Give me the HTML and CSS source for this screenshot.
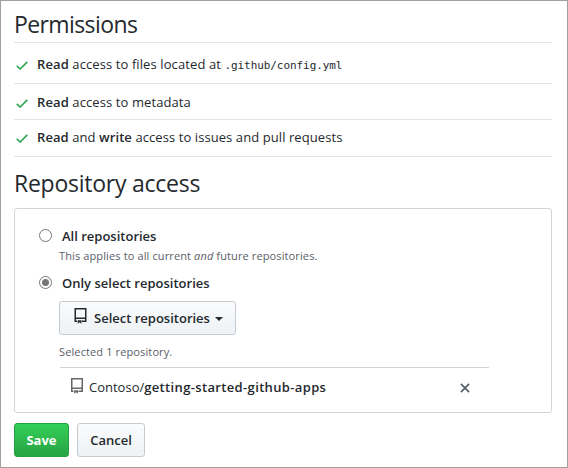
FILE: index.html
```html
<!DOCTYPE html>
<html lang="en">
<head>
<meta charset="utf-8">
<title>Permissions</title>
<link rel="stylesheet" href="styles.css">
</head>
<body>
<main class="page">
  <h2 class="heading">Permissions</h2>
  <ul class="permissions">
    <li class="permission permission-first">
      <svg class="check" viewBox="0 0 12 9" width="12" height="9"><path d="M.8 4.8 4.2 8 11.3.9"/></svg>
      <span class="files"><b>Read</b> access to files located at <code>.github/config.yml</code></span>
    </li>
    <li class="permission">
      <svg class="check" viewBox="0 0 12 9" width="12" height="9"><path d="M.8 4.8 4.2 8 11.3.9"/></svg>
      <span class="metadata"><b>Read</b> access to metadata</span>
    </li>
    <li class="permission permission-last">
      <svg class="check" viewBox="0 0 12 9" width="12" height="9"><path d="M.8 4.8 4.2 8 11.3.9"/></svg>
      <span class="issues"><b>Read</b> and <b>write</b> access to issues and pull requests</span>
    </li>
  </ul>
  <h2 class="heading heading-access">Repository access</h2>
  <section class="box">
    <label class="option"><span class="radio"></span><b class="all">All repositories</b></label>
    <p class="note note-all">This applies to all current <em>and</em> future repositories.</p>
    <label class="option option-select"><span class="radio checked"></span><b>Only select repositories</b></label>
    <button class="btn btn-select" type="button">
      <svg class="repo" viewBox="0 0 12 16" width="13" height="16"><path class="repo-cover" d="M2.500 13.200H.75V.75h10.500V13.200H7.500M.75 10.300h10.500"/><path class="repo-tag" d="M3.200 12.300h3.800v3.500L5.100 14.300 3.200 15.800z"/></svg>
      <span class="select-text">Select repositories</span>
      <span class="caret"></span>
    </button>
    <p class="note note-selected">Selected 1 repository.</p>
    <div class="repo-row">
      <svg class="repo repo-muted" viewBox="0 0 12 16" width="12" height="16"><path class="repo-cover" d="M2.500 13.200H.75V.75h10.500V13.200H7.500M.75 10.300h10.500"/><path class="repo-tag" d="M3.200 12.300h3.800v3.500L5.100 14.300 3.200 15.800z"/></svg>
      <span class="repo-name">Contoso/<b>getting-started-github-apps</b></span>
      <svg class="remove" viewBox="0 0 10 10" width="10" height="10"><path d="m.9.900 8.200 8.200m0-8.200L.9 9.100"/></svg>
    </div>
  </section>
  <div class="actions">
    <button class="btn btn-save" type="button">Save</button>
    <button class="btn btn-cancel" type="button">Cancel</button>
  </div>
</main>
</body>
</html>
```
FILE: styles.css
```css
* { box-sizing: border-box; }
body { margin: 0; background: #fff; color: #24292e; font: 13px/20px "Open Sans", "Noto Sans", sans-serif; }
b { font-weight: 600; }
.page { width: 568px; height: 468px; padding: 0 15px 0 13px; border: 1px solid #a0a0a0; overflow: hidden; }
.heading { margin: 0; height: 41px; padding-top: 7px; font-size: 23px; line-height: 32px; font-weight: 400; letter-spacing: -.6px; }
.permissions { list-style: none; margin: 0; padding: 0; border-top: 1px solid #e1e4e8; }
.permission { display: flex; align-items: center; height: 36px; padding-left: 2px; border-bottom: 1px solid #e1e4e8; }
.permission-first { height: 41px; padding-top: 1px; }
.permission-last { height: 37px; padding-bottom: 2px; }
.check { width: 12px; margin: 3px 9px 0 0; fill: none; stroke: #2ea44f; stroke-width: 1.6; }
.files, .metadata { letter-spacing: .1px; }
.issues { letter-spacing: .08px; }
code { font: 11px "DejaVu Sans Mono", monospace; letter-spacing: -.07px; }
.heading-access { height: 51px; padding-top: 10px; letter-spacing: -.25px; }
.box { height: 205px; padding: 17px 62px 0 24px; border: 1px solid #d1d5da; border-radius: 3px; }
.option { display: flex; align-items: center; height: 20px; }
.radio { display: flex; width: 13px; height: 13px; margin: 0 10px 1px 0; border: 1px solid #767676; border-radius: 50%; align-items: center; justify-content: center; }
.checked::after { content: ""; width: 7px; height: 7px; border-radius: 50%; background: #767676; }
.note { margin: 0 0 0 20px; font-size: 11px; line-height: 18px; color: #586069; letter-spacing: .12px; }
.note-all { padding-top: 1px; height: 18px; }
.option-select { margin-top: 9px; }
.btn { display: flex; align-items: center; justify-content: center; height: 34px; padding: 0; border: 1px solid #c6cbd1; border-radius: 3px; background: linear-gradient(#fafbfc, #eff3f6 90%); color: #24292e; font: 600 13px/20px "Open Sans", sans-serif; }
.btn-select { width: 177px; margin: 8px 0 0 20px; justify-content: flex-start; padding-left: 14px; }
.repo { flex: none; margin-bottom: 4px; color: #24292e; }
.repo-cover { fill: none; stroke: currentColor; stroke-width: 1.5; }
.repo-tag { fill: currentColor; }
.select-text { margin-left: 7px; }
.caret { margin: 1px 0 0 5px; border: 4px solid transparent; border-top-color: #24292e; border-bottom: 0; }
.note-selected { margin-top: 8px; }
.repo-row { display: flex; align-items: center; width: 429px; height: 39px; margin: 6px 0 0 21px; padding: 0 19px 0 11px; border-top: 1px solid #d1d5da; }
.repo-muted { margin-bottom: 2px; color: #666; }
.repo-name { margin-left: 6px; }
.repo-name b { letter-spacing: .35px; }
.remove { margin: 2px 0 0 auto; fill: none; stroke: #586069; stroke-width: 1.7; }
.actions { display: flex; gap: 8px; margin-top: 10px; }
.btn-save { width: 55px; color: #fff; border-color: #269f42; background: linear-gradient(#34d058, #28a745 90%); font-weight: 700; }
.btn-cancel { width: 68px; }
```
